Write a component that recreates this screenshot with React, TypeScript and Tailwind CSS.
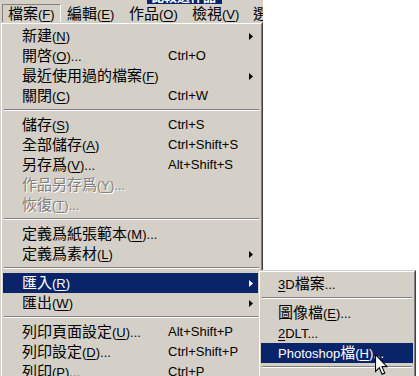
import clsx from "clsx";

type Entry =
  | { sep: true }
  | {
      sep?: false;
      label: string;
      shortcut?: string;
      arrow?: boolean;
      disabled?: boolean;
      active?: boolean;
    };

const fileMenu: Entry[] = [
  { label: "新建(&N)", arrow: true },
  { label: "開啓(&O)...", shortcut: "Ctrl+O" },
  { label: "最近使用過的檔案(&F)", arrow: true },
  { label: "關閉(&C)", shortcut: "Ctrl+W" },
  { sep: true },
  { label: "儲存(&S)", shortcut: "Ctrl+S" },
  { label: "全部儲存(&A)", shortcut: "Ctrl+Shift+S" },
  { label: "另存爲(&V)...", shortcut: "Alt+Shift+S" },
  { label: "作品另存爲(&Y)...", disabled: true },
  { label: "恢復(&T)...", disabled: true },
  { sep: true },
  { label: "定義爲紙張範本(&M)..." },
  { label: "定義爲素材(&L)", arrow: true },
  { sep: true },
  { label: "匯入(&R)", arrow: true, active: true },
  { label: "匯出(&W)", arrow: true },
  { sep: true },
  { label: "列印頁面設定(&U)...", shortcut: "Alt+Shift+P" },
  { label: "列印設定(&D)...", shortcut: "Ctrl+Shift+P" },
  { label: "列印(&P)...", shortcut: "Ctrl+P" },
  { sep: true },
  { label: "傳送(&E)..." },
];

const importMenu: Entry[] = [
  { label: "&3D檔案..." },
  { sep: true },
  { label: "圖像檔(&E)..." },
  { label: "&2DLT..." },
  { label: "Photoshop檔(&H)...", active: true },
  { sep: true },
];

// "&X" marks the access key; CJK runs get the larger CJK face
function Label({ text }: { text: string }) {
  const chars: { c: string; u: boolean }[] = [];
  for (let i = 0; i < text.length; i++) {
    if (text[i] === "&" && i + 1 < text.length) {
      chars.push({ c: text[i + 1], u: true });
      i++;
    } else chars.push({ c: text[i], u: false });
  }
  const groups: { s: string; u: boolean; cjk: boolean }[] = [];
  for (const ch of chars) {
    const cjk = /[\u2E80-\u9FFF\uF900-\uFAFF]/.test(ch.c);
    const last = groups[groups.length - 1];
    if (last && last.u === ch.u && last.cjk === cjk) last.s += ch.c;
    else groups.push({ s: ch.c, u: ch.u, cjk });
  }
  return (
    <>
      {groups.map((g, i) => (
        <span
          key={i}
          className={clsx(
            g.cjk
              ? "font-['Noto_Sans_CJK_TC',sans-serif] text-[15px]"
              : "text-[13px]",
            g.u && "underline decoration-1 underline-offset-2"
          )}
        >
          {g.s}
        </span>
      ))}
    </>
  );
}

function Arrow({ white }: { white?: boolean }) {
  return (
    <svg width="4" height="7" viewBox="0 0 4 7" className="mr-[7px] shrink-0">
      <polygon points="0,0 4,3.5 0,7" fill={white ? "#fff" : "#000"} />
    </svg>
  );
}

function Separator() {
  return (
    <div className="h-[9px] px-[1px] pt-[3px]">
      <div className="h-px bg-[#808080]" />
      <div className="h-px bg-white" />
    </div>
  );
}

function MenuRows({ items, labelWidth, indent }: { items: Entry[]; labelWidth: string; indent: string }) {
  return (
    <>
      {items.map((it, i) =>
        it.sep ? (
          <Separator key={i} />
        ) : (
          <div
            key={i}
            className={clsx(
              "flex h-5 items-center leading-5 whitespace-nowrap",
              it.active && "bg-[#0a246a] text-white",
              it.disabled && "text-[#808080] [text-shadow:1px_1px_0_#fff]"
            )}
          >
            <div className={clsx("shrink-0", labelWidth, indent)}>
              <Label text={it.label} />
            </div>
            <div className="flex-1 text-[13px]">{it.shortcut}</div>
            {it.arrow && <Arrow white={it.active} />}
          </div>
        )
      )}
    </>
  );
}

function Bevel({ children, className }: { children: React.ReactNode; className?: string }) {
  return (
    <div className={clsx("border border-t-[#d4d0c8] border-l-[#d4d0c8] border-r-[#404040] border-b-[#404040] bg-[#d4d0c8]", className)}>
      <div className="h-full border border-t-white border-l-white border-r-[#808080] border-b-[#808080] px-[1px] pt-[2px]">
        {children}
      </div>
    </div>
  );
}

const bar = [
  { label: "檔案(&F)", w: "w-[59px]" },
  { label: "編輯(&E)", w: "w-[62px]" },
  { label: "作品(&O)", w: "w-[63px]" },
  { label: "檢視(&V)", w: "w-[61px]" },
  { label: "選", w: "w-[16px] overflow-hidden" },
];

export default function App() {
  return (
    <div className="relative h-[376px] w-[419px] overflow-hidden bg-white font-['Liberation_Sans','Noto_Sans_CJK_TC',sans-serif] text-black">
      <div className="flex w-[263px] flex-col">
        {/* bit of the window caption peeking in */}
        <div className="flex h-[4px] bg-[#d4d0c8]">
          <div className="ml-[147px] h-full w-[75px] overflow-hidden bg-[#0a246a]">
            <div className="-mt-[12px] pl-[4px] font-['Noto_Sans_CJK_TC',sans-serif] text-[13px] leading-[15px] font-bold whitespace-nowrap text-white">
              比較選作品
            </div>
          </div>
        </div>

        <div className="flex h-[18px] bg-[#d4d0c8]">
          {bar.map((b, i) => (
            <div
              key={b.label}
              className={clsx(
                "flex shrink-0 items-center leading-none whitespace-nowrap",
                b.w,
                i === 0
                  ? "ml-[2px] border-t border-r border-l border-t-[#808080] border-r-white border-l-[#808080] pl-[5px]"
                  : "pl-[6px]"
              )}
            >
              <span className="whitespace-nowrap">
                <Label text={b.label} />
              </span>
            </div>
          ))}
        </div>

        <Bevel className="h-[360px] w-[263px]">
          <MenuRows items={fileMenu} labelWidth="w-[165px]" indent="pl-[19px]" />
        </Bevel>
      </div>

      <Bevel className="absolute top-[270px] left-[258px] h-[120px] w-[158px]">
        <MenuRows items={importMenu} labelWidth="w-[150px]" indent="pl-[17px]" />
      </Bevel>

      <svg
        width="13"
        height="22"
        viewBox="0 0 12 20"
        className="absolute top-[354px] left-[375px]"
      >
        <path
          d="M0.5 0.5 L0.5 16 L4 12.5 L6.5 18.5 L9 17.5 L6.5 11.5 L11 11.5 Z"
          fill="#fff"
          stroke="#000"
          strokeWidth="1"
          strokeLinejoin="miter"
        />
      </svg>
    </div>
  );
}
